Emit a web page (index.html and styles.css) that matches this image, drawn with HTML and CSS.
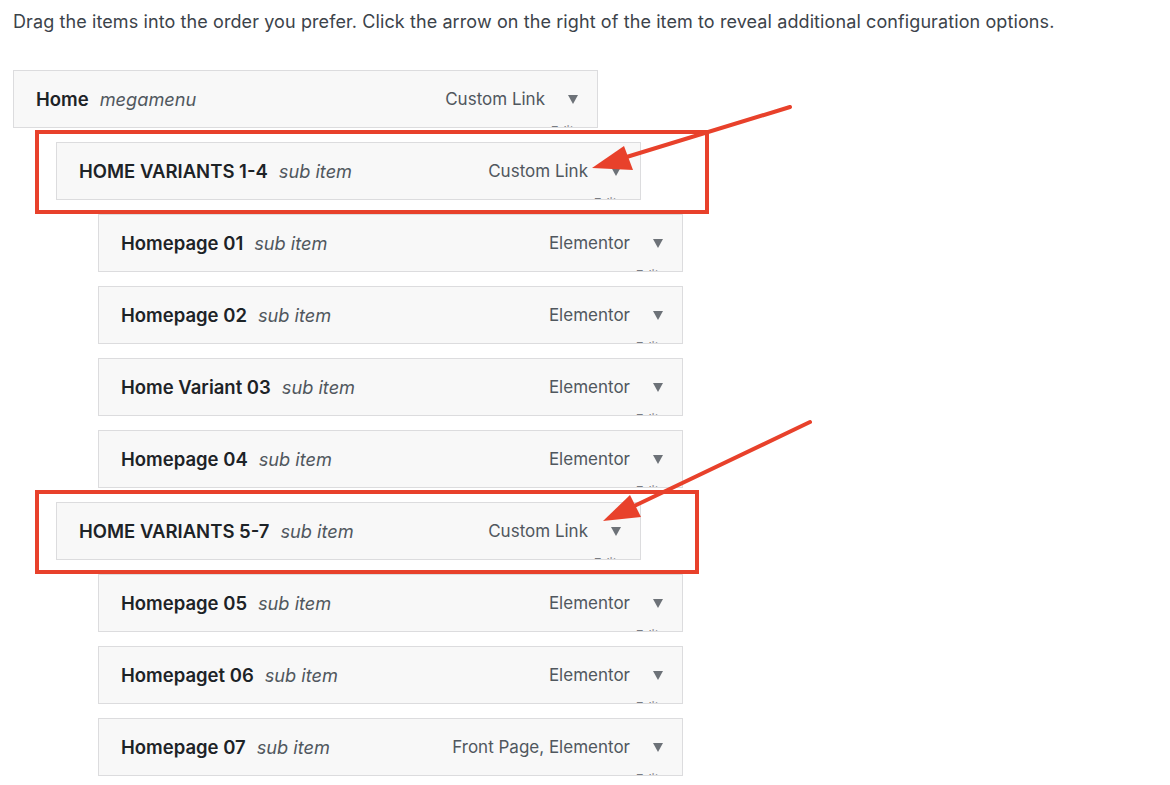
FILE: index.html
```html
<!DOCTYPE html>
<html lang="en">
<head>
  <meta charset="UTF-8" />
  <title>Menu structure</title>
  <link rel="stylesheet" href="styles.css">
</head>
<body>
  <div class="halaman">
    <p class="petunjuk">Drag the items into the order you prefer. Click the arrow on the right of the item to reveal additional configuration options.</p>

    <ul class="menu">
      <li class="item depth-0">
        <span class="judul"><b>Home</b><i>megamenu</i></span>
        <span class="tipe">Custom Link</span>
        <span class="panah"></span>
        <span class="edit">Edit</span>
      </li>
      <li class="item depth-1">
        <span class="judul"><b>HOME VARIANTS 1-4</b><i>sub item</i></span>
        <span class="tipe">Custom Link</span>
        <span class="panah"></span>
        <span class="edit">Edit</span>
      </li>
      <li class="item depth-2">
        <span class="judul"><b>Homepage 01</b><i>sub item</i></span>
        <span class="tipe">Elementor</span>
        <span class="panah"></span>
        <span class="edit">Edit</span>
      </li>
      <li class="item depth-2">
        <span class="judul"><b>Homepage 02</b><i>sub item</i></span>
        <span class="tipe">Elementor</span>
        <span class="panah"></span>
        <span class="edit">Edit</span>
      </li>
      <li class="item depth-2">
        <span class="judul"><b>Home Variant 03</b><i>sub item</i></span>
        <span class="tipe">Elementor</span>
        <span class="panah"></span>
        <span class="edit">Edit</span>
      </li>
      <li class="item depth-2">
        <span class="judul"><b>Homepage 04</b><i>sub item</i></span>
        <span class="tipe">Elementor</span>
        <span class="panah"></span>
        <span class="edit">Edit</span>
      </li>
      <li class="item depth-1">
        <span class="judul"><b>HOME VARIANTS 5-7</b><i>sub item</i></span>
        <span class="tipe">Custom Link</span>
        <span class="panah"></span>
        <span class="edit">Edit</span>
      </li>
      <li class="item depth-2">
        <span class="judul"><b>Homepage 05</b><i>sub item</i></span>
        <span class="tipe">Elementor</span>
        <span class="panah"></span>
        <span class="edit">Edit</span>
      </li>
      <li class="item depth-2">
        <span class="judul"><b>Homepaget 06</b><i>sub item</i></span>
        <span class="tipe">Elementor</span>
        <span class="panah"></span>
        <span class="edit">Edit</span>
      </li>
      <li class="item depth-2">
        <span class="judul"><b>Homepage 07</b><i>sub item</i></span>
        <span class="tipe">Front Page, Elementor</span>
        <span class="panah"></span>
        <span class="edit">Edit</span>
      </li>
    </ul>

    <!-- anotasi merah di atas daftar -->
    <div class="kotak kotak-1"></div>
    <div class="kotak kotak-2"></div>
    <svg class="anotasi" width="1170" height="785" viewBox="0 0 1170 785">
      <line x1="790" y1="107" x2="620" y2="159" stroke="#e8412b" stroke-width="4" stroke-linecap="round"/>
      <polygon points="592,168 624,146 633,170" fill="#e8412b"/>
      <line x1="810" y1="422" x2="630" y2="508" stroke="#e8412b" stroke-width="4" stroke-linecap="round"/>
      <polygon points="603,521 630,495 641,517" fill="#e8412b"/>
    </svg>
  </div>
</body>
</html>
```

FILE: styles.css
```css
* {
  margin: 0;
  padding: 0;
  box-sizing: border-box;
}

html, body {
  height: 100%;
  background: #fff;
  font-family: Inter, "Liberation Sans", sans-serif;
}

.halaman {
  position: relative;
  width: 1170px;
  height: 785px;
  overflow: hidden;
  padding: 10px 13px 0;
}

.petunjuk {
  font-size: 18px;
  line-height: 24px;
  color: #3c434a;
  letter-spacing: 0.1px;
  white-space: nowrap;
}

.menu {
  list-style: none;
  margin-top: 36px;
}

.item {
  position: relative;
  display: flex;
  align-items: center;
  width: 585px;
  height: 58px;
  margin-bottom: 14px;
  padding: 0 19px 0 22px;
  background: #f8f8f8;
  border: 1px solid #dcdcde;
  overflow: hidden;
}

.depth-1 { margin-left: 43px; }
.depth-2 { margin-left: 85px; }

.judul {
  flex: 1;
  font-size: 18.5px;
  color: #1d2327;
  white-space: nowrap;
}

.judul b {
  font-weight: 600;
  margin-right: 11px;
}

.judul i {
  color: #50575e;
  font-size: 18.2px;
}

.tipe {
  font-size: 17px;
  color: #50575e;
  white-space: nowrap;
}

.panah {
  width: 0;
  height: 0;
  margin-left: 23px;
  border-left: 5.5px solid transparent;
  border-right: 5.5px solid transparent;
  border-top: 9px solid #6d7278;
}

.edit {
  position: absolute;
  right: 23px;
  bottom: -12px;
  font-size: 13px;
  color: #787c82;
}

.kotak {
  position: absolute;
  left: 35px;
  height: 84px;
  border: 4px solid #e8412b;
}

.kotak-1 {
  top: 130px;
  width: 674px;
}

.kotak-2 {
  top: 490px;
  width: 664px;
}

.anotasi {
  position: absolute;
  left: 0;
  top: 0;
  pointer-events: none;
}
```
